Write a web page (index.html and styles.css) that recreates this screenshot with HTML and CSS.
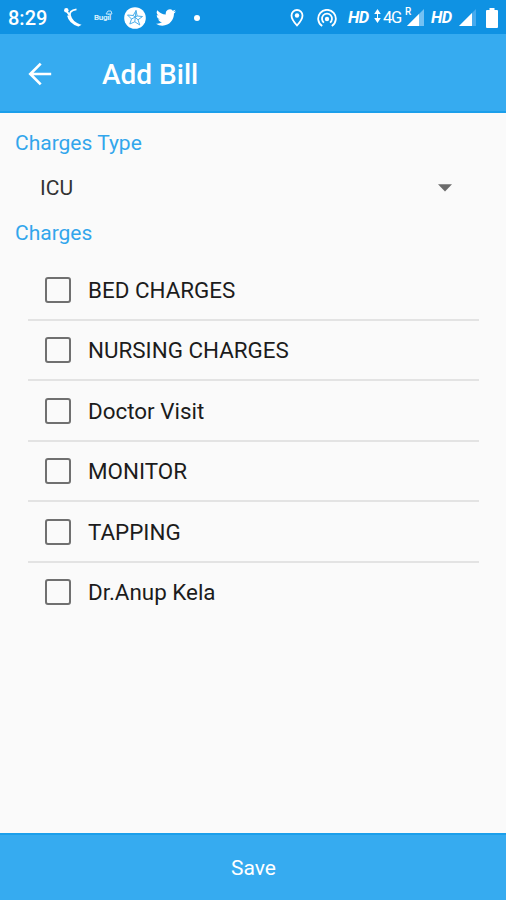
FILE: index.html
```html
<!DOCTYPE html>
<html lang="en">
<head>
<meta charset="utf-8">
<title>Add Bill</title>
<link rel="stylesheet" href="styles.css">
</head>
<body>
<div class="screen">
  <div class="status">
    <div class="status-left">
      <span class="time">8:29</span>
      <svg class="runner" width="19" height="20" viewBox="0 0 19 20"><circle cx="3.300" cy="3.300" r="2.200" fill="#fff"/><path d="M13.500 2.300C8 3 6.300 5.500 7 8.500C8 13 11 16 16.500 18L15.500 18.600C9 16.500 6 13 5 8.500" fill="none" stroke="#fff" stroke-width="1.800"/><path d="M3.500 4L6.500 8" stroke="#fff" stroke-width="2"/></svg>
      <span class="bugil">Bugil<svg class="cap" width="8" height="5" viewBox="0 0 8 5"><path d="M1 4L3 1H6L7 4Z" fill="none" stroke="#b9e2fb"/></svg></span>
      <svg class="star" width="22" height="22" viewBox="0 0 22 22"><circle cx="11" cy="11" r="10.800" fill="#fff"/><path d="M12 3.500L13.200 9L18.500 9.500L14 12.800L15.800 18L10.800 14.800L5.800 17L7.500 12L3.500 8L9.200 8.500ZM9.200 8.500L14 12.800M13.200 9L7.500 12M10.800 14.800L12 3.500" fill="none" stroke="#4baeea" stroke-width="1"/></svg>
      <svg class="bird" width="20" height="17" viewBox="0 2 24 20"><path fill="#fff" d="M23.950 4.570a10 10 0 0 1-2.820.77 4.960 4.960 0 0 0 2.160-2.720c-.95.55-2 .95-3.120 1.180a4.920 4.920 0 0 0-8.380 4.480C7.690 8.100 4.070 6.130 1.640 3.160a4.920 4.920 0 0 0 1.520 6.570 4.900 4.900 0 0 1-2.230-.61v.06a4.920 4.920 0 0 0 3.950 4.830 5 5 0 0 1-2.210.08 4.940 4.940 0 0 0 4.600 3.420A9.870 9.870 0 0 1 0 19.540a14 14 0 0 0 7.550 2.210c9.050 0 14-7.500 14-13.980v-.63a10 10 0 0 0 2.400-2.570z"/></svg>
      <i class="dot"></i>
    </div>
    <div class="status-right">
      <svg width="14" height="18" viewBox="0 0 14 18"><path d="M7 1A5.500 5.500 0 0 0 1.500 6.500C1.500 10.500 7 16.500 7 16.500S12.500 10.500 12.500 6.500A5.500 5.500 0 0 0 7 1Z" fill="none" stroke="#fff" stroke-width="1.800"/><circle cx="7" cy="6.500" r="2.200" fill="#fff"/></svg>
      <svg class="hotspot" width="20" height="18" viewBox="0 0 20 18"><g fill="none" stroke="#fff" stroke-width="1.800"><path d="M5.200 17A8.800 8.800 0 1 1 14.800 17"/><path d="M7 13.600A5 5 0 1 1 13 13.600"/></g><circle cx="10" cy="10" r="2.200" fill="#fff"/></svg>
      <span class="hd hd-first">HD</span>
      <svg class="updown" width="7" height="14" viewBox="0 0 7 14"><path d="M3.500 0L6.800 5H.2ZM3.500 14L6.800 9H.2Z" fill="#fff"/><path d="M3.500 4V10" stroke="#fff"/></svg>
      <span class="net">4G</span>
      <span class="roam"><span class="r">R</span><svg width="17" height="17" viewBox="0 0 17 17"><path d="M17 0V17H0Z" fill="#74c1f3"/><path d="M12 5V17H0Z" fill="#fff"/></svg></span>
      <span class="hd hd-second">HD</span>
      <svg class="signal" width="17" height="17" viewBox="0 0 17 17"><path d="M17 0V17H0Z" fill="#47aaee"/><path d="M13 4V17H0Z" fill="#fff"/></svg>
      <svg class="battery" width="12" height="20" viewBox="0 0 12 20"><path d="M3.500 0H8.500V2H11Q12 2 12 3V19Q12 20 11 20H1Q0 20 0 19V3Q0 2 1 2H3.500Z" fill="#fff"/></svg>
    </div>
  </div>
  <header class="appbar">
    <svg width="24" height="24" viewBox="0 0 24 24"><path d="M23.200 12H2M12.700 1.600L2.300 12L12.700 22.400" fill="none" stroke="#fff" stroke-width="2.700"/></svg>
    <h1>Add Bill</h1>
  </header>
  <main>
    <div class="label">Charges Type</div>
    <div class="select"><span>ICU</span><svg width="14" height="8" viewBox="0 0 14 8"><path d="M0 .3H14L7 7.500Z" fill="#6c6c6c"/></svg></div>
    <div class="label">Charges</div>
    <ul>
      <li><i class="box"></i><span>BED CHARGES</span></li>
      <li><i class="box"></i><span>NURSING CHARGES</span></li>
      <li><i class="box"></i><span>Doctor Visit</span></li>
      <li><i class="box"></i><span>MONITOR</span></li>
      <li><i class="box"></i><span>TAPPING</span></li>
      <li><i class="box"></i><span>Dr.Anup Kela</span></li>
    </ul>
  </main>
  <footer>Save</footer>
</div>
</body>
</html>
```
FILE: styles.css
```css
* { box-sizing: border-box; }
body { margin: 0; font-family: Roboto, "Liberation Sans", sans-serif; background: #fafafa; }
svg { display: block; flex: none; }
.screen { width: 506px; height: 900px; display: flex; flex-direction: column; overflow: hidden; }
.status { height: 34px; flex: none; background: #0f92e3; color: #fff; display: flex; justify-content: space-between; padding: 0 8px 0 8px; }
.status-left, .status-right { display: flex; align-items: center; padding-top: 1px; }
.time { width: 40px; font-size: 20px; font-weight: 500; line-height: 34px; padding-top: 1px; white-space: nowrap; }
.runner { margin-left: 15px; margin-bottom: 2px; }
.bugil { position: relative; margin-left: 12px; width: 20px; font-size: 8px; font-weight: 700; letter-spacing: -0.3px; color: #d5effd; }
.cap { position: absolute; right: 1px; top: -3px; }
.star { margin-left: 10px; }
.bird { margin-left: 10px; }
.dot { width: 6px; height: 6px; border-radius: 50%; background: #fff; margin-left: 18px; }
.hotspot { margin-left: 13px; }
.hd { font-size: 16.500px; font-weight: 700; font-style: italic; width: 22px; letter-spacing: -0.6px; line-height: 34px; white-space: nowrap; }
.hd-first { margin-left: 11px; }
.updown { margin-left: 4px; margin-bottom: 3px; }
.net { margin-left: 2px; width: 20px; font-size: 16.500px; letter-spacing: -1.2px; }
.roam { position: relative; margin-left: 4px; }
.r { position: absolute; left: -2px; top: -3px; font-size: 10px; line-height: 12px; font-weight: 500; }
.hd-second { margin-left: 7px; }
.signal { margin-left: 6px; }
.battery { margin-left: 10px; }
.appbar { height: 79px; flex: none; background: #36abf0; border-bottom: 2px solid #1b9feb; display: flex; align-items: center; padding: 2px 0 0 28px; color: #fff; }
h1 { margin: 2px 0 0 50px; font-size: 28px; font-weight: 500; line-height: 36px; }
main { flex: 1; padding-top: 16px; }
.label { padding-left: 15px; color: #32a6ec; font-size: 21px; line-height: 28px; }
.select { height: 62px; display: flex; align-items: center; justify-content: space-between; padding: 0 54px 1px 40px; font-size: 21px; color: #333; }
ul { list-style: none; margin: 13px 27px 0 28px; padding: 0; }
li { height: 60.500px; border-bottom: 2px solid #e3e3e3; display: flex; align-items: center; padding: 1px 0 0 17px; font-size: 22.400px; color: #1c1c1c; }
li:last-child { border-bottom-color: transparent; }
.box { width: 26px; height: 26px; border: 2.500px solid #707070; border-radius: 3px; margin-right: 17px; flex: none; }
footer { height: 67px; flex: none; background: #36abf0; border-top: 2px solid #1b9feb; color: #fff; font-size: 21px; display: flex; align-items: center; justify-content: center; padding-left: 1px; }
```
